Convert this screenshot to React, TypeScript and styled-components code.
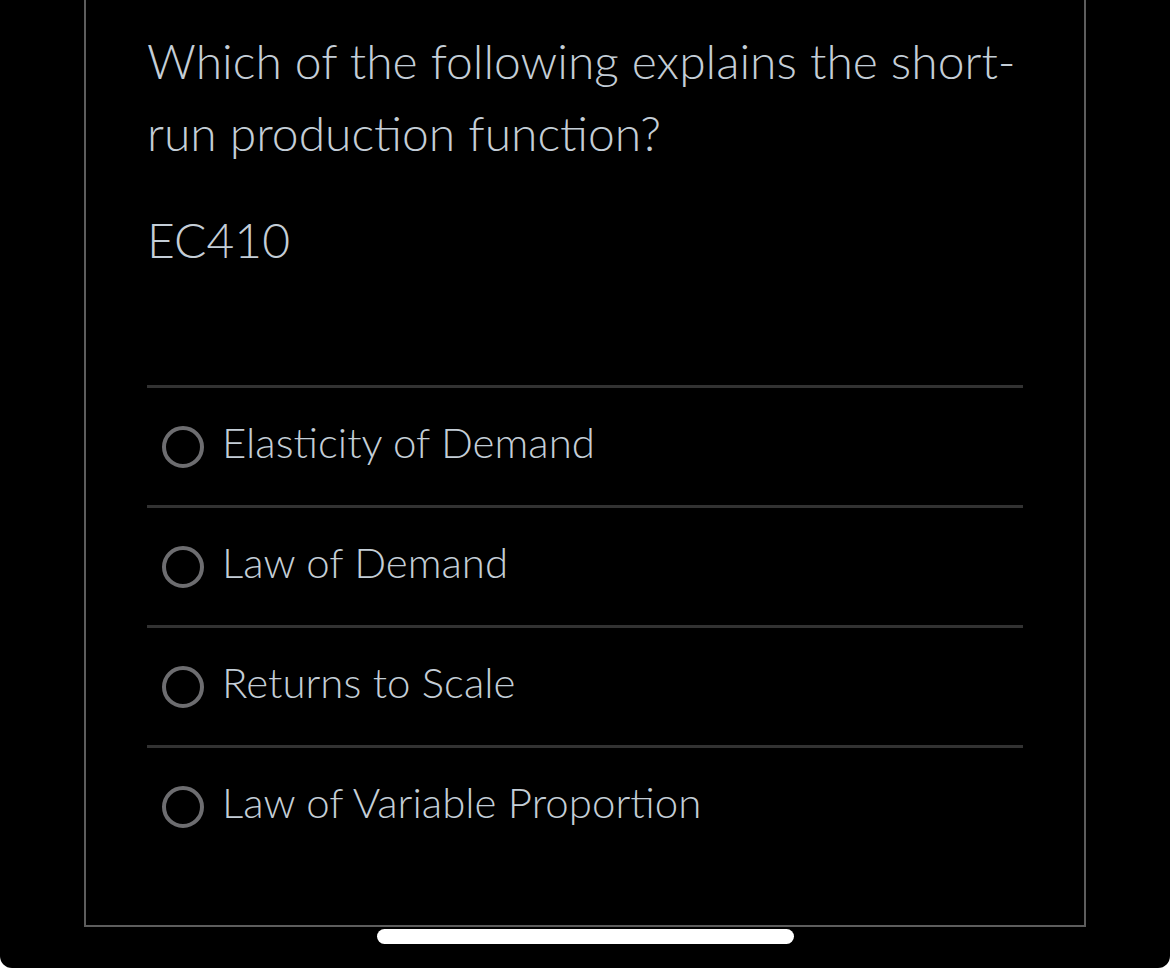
import React from "react";
import styled, { createGlobalStyle } from "styled-components";

const GlobalStyle = createGlobalStyle`
    html, body {
        margin: 0;
        padding: 0;
        background: #ffffff;
    }
    body {
        font-family: "Lato Light", Lato, "Open Sans", sans-serif;
    }
`;

const Screen = styled.div`
    width: 1170px;
    height: 968px;
    background: #000;
    border-radius: 0 0 12px 12px;
    overflow: hidden;
    display: flex;
    flex-direction: column;
    align-items: center;
`;

const Card = styled.div`
    box-sizing: border-box;
    width: 1002px;
    height: 937px;
    margin-top: -10px;
    border: 2px solid #5d5d5d;
    padding: 33px 61px 0;
`;

const Question = styled.p`
    margin: 0;
    font-size: 48px;
    font-weight: 300;
    line-height: 72px;
    color: #c4ced7;
`;

const Code = styled(Question)`
    margin-top: 35px;
`;

const Options = styled.div`
    margin-top: 109px;
    display: flex;
    flex-direction: column;
`;

const Row = styled.label`
    display: flex;
    align-items: center;
    gap: 18px;
    height: 117px;
    padding-left: 15px;
    border-top: 3px solid #323232;
`;

const Radio = styled.span`
    box-sizing: border-box;
    flex: none;
    width: 42px;
    height: 42px;
    border-radius: 50%;
    border: 4px solid #6d6d70;
`;

const OptionText = styled.span`
    font-size: 42px;
    font-weight: 300;
    line-height: 52px;
    color: #c4ced7;
    margin-bottom: 10px;
`;

const HomeBar = styled.div`
    width: 417px;
    height: 15px;
    margin-top: 2px;
    border-radius: 8px;
    background: #fff;
`;

const options = [
    "Elasticity of Demand",
    "Law of Demand",
    "Returns to Scale",
    "Law of Variable Proportion",
];

export default function App() {
    return (
        <Screen>
            <GlobalStyle />
            <Card>
                <Question>Which of the following explains the short-run production function?</Question>
                <Code>EC410</Code>
                <Options>
                    {options.map((o) => (
                        <Row key={o}>
                            <Radio />
                            <OptionText>{o}</OptionText>
                        </Row>
                    ))}
                </Options>
            </Card>
            <HomeBar />
        </Screen>
    );
}
